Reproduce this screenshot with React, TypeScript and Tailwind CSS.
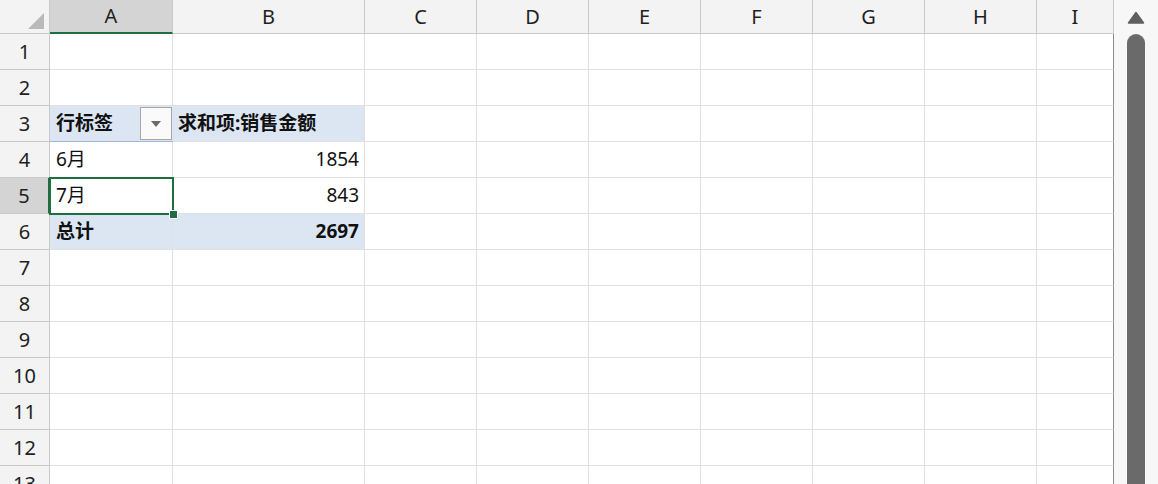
import React from 'react';

const cols = [
  { key: 'A', w: 'w-[123px]' },
  { key: 'B', w: 'w-[192px]' },
  { key: 'C', w: 'w-[112px]' },
  { key: 'D', w: 'w-[112px]' },
  { key: 'E', w: 'w-[112px]' },
  { key: 'F', w: 'w-[112px]' },
  { key: 'G', w: 'w-[112px]' },
  { key: 'H', w: 'w-[112px]' },
  { key: 'I', w: 'w-[77px]' },
];

const rows = [1, 2, 3, 4, 5, 6, 7, 8, 9, 10, 11, 12, 13];

const font = { fontFamily: '"Noto Sans", "Noto Sans CJK SC", sans-serif' };

// pivot content for rows 3-6, columns A/B
const pivot: Record<number, { a: string; b: string; bold?: boolean; band?: boolean }> = {
  3: { a: '行标签', b: '求和项:销售金额', bold: true, band: true },
  4: { a: '6月', b: '1854' },
  5: { a: '7月', b: '843' },
  6: { a: '总计', b: '2697', bold: true, band: true },
};

const DropButton = () => (
  <div className="ml-auto mr-[1px] flex h-[33px] w-[32px] items-center justify-center border border-[#a6a6a6] bg-[#fafafa]">
    <svg width="10" height="6" viewBox="0 0 10 6">
      <path d="M0 0 L10 0 L5 6 Z" fill="#6b6b6b" />
    </svg>
  </div>
);

const Cell = ({ row, col, w }: { row: number; col: string; w: string }) => {
  const p = pivot[row];
  const inPivot = p && (col === 'A' || col === 'B');
  const band = inPivot && p.band;
  let border = 'border-b border-[#e1e1e1]';
  if (inPivot && row === 3) border = 'border-b border-[#9fb7dc]';
  if (inPivot && row === 5) border = 'border-b border-[#9fb7dc]';
  const right = inPivot && row === 3 && col === 'A' ? '' : 'border-r border-[#e1e1e1]';
  const rightLast = col === 'I' ? 'border-r border-r-[#8a8a8a]' : right;
  return (
    <div
      className={`${w} h-[36px] shrink-0 ${border} ${rightLast} ${band ? 'bg-[#dce6f3]' : 'bg-white'} flex items-center text-[19px] text-[#111111] ${p?.bold ? 'font-bold' : ''}`}
    >
      {inPivot && col === 'A' && (
        <>
          <span className="pl-[6px]">{p.a}</span>
          {row === 3 && <DropButton />}
        </>
      )}
      {inPivot && col === 'B' && (
        <span className={`w-full ${row === 3 ? 'pl-[5px] text-left' : 'pr-[5px] text-right'}`}>{p.b}</span>
      )}
    </div>
  );
};

export default function App() {
  return (
    <div className="flex h-[484px] w-[1158px] overflow-hidden bg-white" style={font}>
      <div className="relative w-[1114px] shrink-0">
        {/* column header */}
        <div className="flex h-[34px]">
          <div className="relative h-[34px] w-[50px] shrink-0 border-b border-r border-[#c9c9c9] bg-[#f3f3f3]">
            <svg className="absolute bottom-[4px] right-[5px]" width="16" height="16" viewBox="0 0 16 16">
              <path d="M16 0 L16 16 L0 16 Z" fill="#b9b9b9" />
            </svg>
          </div>
          {cols.map((c) => (
            <div
              key={c.key}
              className={`${c.w} flex h-[34px] shrink-0 items-center justify-center text-[20px] text-[#1f1f1f] ${
                c.key === 'A'
                  ? 'border-b-2 border-r border-b-[#1e6e42] border-r-[#c9c9c9] bg-[#d4d4d4]'
                  : 'border-b border-r border-[#c9c9c9] bg-[#f3f3f3]'
              }`}
            >
              {c.key}
            </div>
          ))}
        </div>
        {rows.map((r) => (
          <div key={r} className="flex h-[36px]">
            <div
              className={`flex h-[36px] w-[50px] shrink-0 items-center justify-center border-b border-r border-[#c9c9c9] text-[20px] text-[#1f1f1f] ${
                r === 5 ? 'bg-[#d4d4d4] border-r-2 border-r-[#1e6e42]' : 'bg-[#f3f3f3]'
              }`}
            >
              {r}
            </div>
            {cols.map((c) => (
              <Cell key={c.key} row={r} col={c.key} w={c.w} />
            ))}
          </div>
        ))}
        {/* active cell A5 */}
        <div className="pointer-events-none absolute left-[49px] top-[177px] h-[38px] w-[125px] border-2 border-[#1e6e42]" />
        <div className="absolute left-[169px] top-[210px] h-[9px] w-[9px] border border-white bg-[#1e6e42]" />
      </div>
      {/* vertical scrollbar */}
      <div className="flex w-[44px] shrink-0 flex-col items-center bg-[#f7f7f7]">
        <div className="flex h-[34px] shrink-0 items-center justify-center">
          <svg width="18" height="13" viewBox="0 0 18 13">
            <path d="M9 1.5 L16.5 12 L1.5 12 Z" fill="#5f5f5f" stroke="#5f5f5f" strokeWidth="1.5" strokeLinejoin="round" />
          </svg>
        </div>
        <div className="h-[460px] w-[18px] shrink-0 rounded-t-full bg-[#6a6a6a]" />
      </div>
    </div>
  );
}
